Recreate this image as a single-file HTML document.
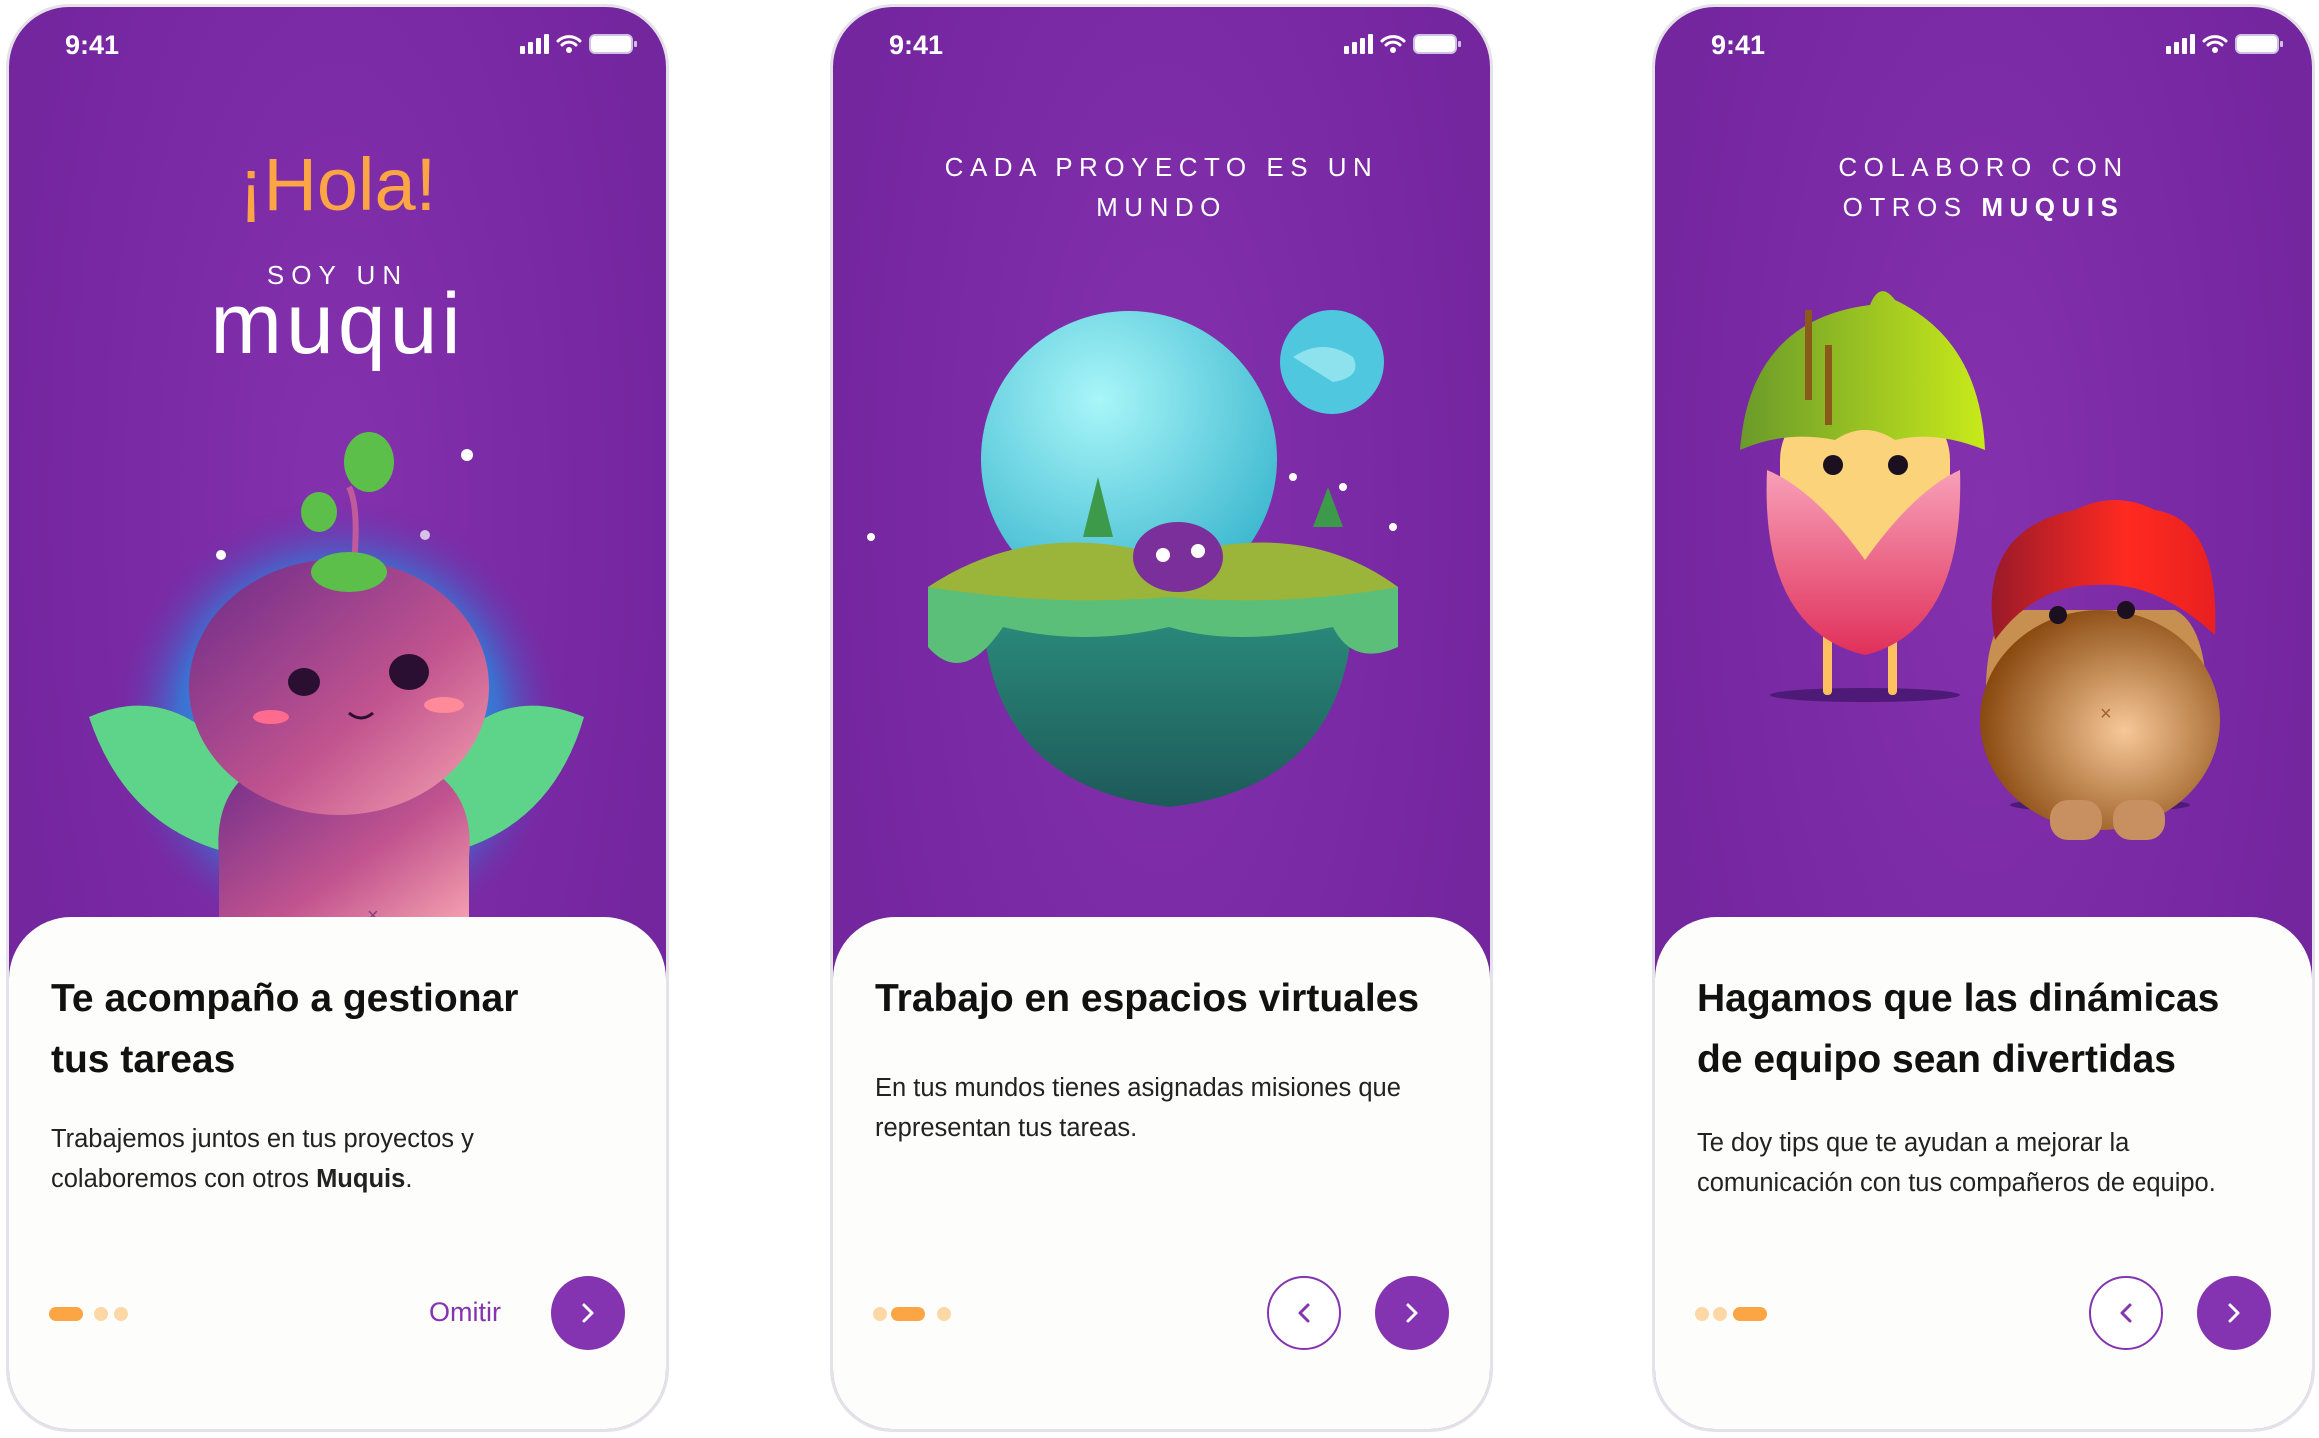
<!DOCTYPE html>
<html><head><meta charset="utf-8"><style>
*{margin:0;padding:0;box-sizing:border-box}
body{width:2319px;height:1438px;background:#fff;position:relative;overflow:hidden;font-family:"Liberation Sans",sans-serif}
.ph{position:absolute;top:7px;width:657px;height:1422px;border-radius:60px;overflow:hidden;background:radial-gradient(ellipse at 50% 35%,#8431ad 0%,#7627a1 60%,#6f249a 100%);box-shadow:0 0 0 3px #e4e2e8}
.st{position:absolute;left:56px;top:23px;color:#fff;font-size:27px;font-weight:bold}
.ic{position:absolute;right:28px;top:26px}
.card{position:absolute;left:0;top:910px;width:100%;height:520px;background:#fdfdfc;border-radius:62px 62px 0 0}
.t{position:absolute;left:42px;font-size:39px;font-weight:bold;color:#111;line-height:61px}
.b{position:absolute;left:42px;font-size:25.5px;color:#222;line-height:40px}
.dots{position:absolute;top:1300px;left:40px;height:14px}
.d{position:absolute;top:0;width:14px;height:14px;border-radius:7px;background:#fdd7a6}
.d.on{background:#fba544;width:34px}
.btn{position:absolute;top:1269px;width:74px;height:74px;border-radius:50%;background:#8434b0}
.btn.o{background:#fff;border:2px solid #8434b0}
.btn svg{position:absolute;left:23px;top:23px}
.hd{position:absolute;left:0;width:100%;text-align:center;color:#fff;font-size:26px;letter-spacing:6.5px;line-height:40px}
</style></head><body>

<div class="ph" style="left:9px">
 <div class="st">9:41</div>
 <svg class="ic" width="118" height="22" viewBox="0 0 118 22"><rect x="0" y="13" width="5" height="8" rx="1" fill="#fff"/><rect x="8" y="9" width="5" height="12" rx="1" fill="#fff"/><rect x="16" y="5" width="5" height="16" rx="1" fill="#fff"/><rect x="24" y="1" width="5" height="20" rx="1" fill="#fff"/><path d="M38 8a16 16 0 0 1 22 0M42 12a10 10 0 0 1 14 0" stroke="#fff" stroke-width="3" fill="none" stroke-linecap="round"/><circle cx="49" cy="17" r="3" fill="#fff"/><rect x="70" y="2" width="42" height="18" rx="5" fill="#fff" stroke="#cfc2e0" stroke-width="2"/><rect x="114" y="8" width="3" height="6" rx="1" fill="#cfc2e0"/></svg>
 <div style="position:absolute;top:135px;width:100%;text-align:center;color:#fba544;font-size:74px">¡Hola!</div>
 <div class="hd" style="top:248px;letter-spacing:7px">SOY UN</div>
 <div style="position:absolute;top:268px;width:100%;text-align:center;color:#fff;font-size:86px;letter-spacing:4px">muqui</div>
 <svg style="position:absolute;left:0;top:380px" width="657" height="540">
  <defs><radialGradient id="g1" cx=".5" cy=".5" r=".5"><stop offset="0" stop-color="#16e0f5"/><stop offset=".7" stop-color="#3d6fd0"/><stop offset="1" stop-color="#7627a1" stop-opacity="0"/></radialGradient>
  <linearGradient id="h1" x1="0" y1="0" x2="1" y2="1"><stop offset="0" stop-color="#6a2a8a"/><stop offset=".6" stop-color="#c2548f"/><stop offset="1" stop-color="#f7a4b0"/></linearGradient></defs>
  <ellipse cx="330" cy="340" rx="230" ry="230" fill="url(#g1)"/>
  <path d="M80 330 Q170 290 240 390 L240 470 Q120 450 80 330Z" fill="#5ed48a"/>
  <path d="M575 330 Q480 290 420 390 L420 470 Q540 450 575 330Z" fill="#5ed48a"/>
  <path d="M210 470 Q200 360 340 360 Q470 370 460 470 L460 540 L210 540Z" fill="url(#h1)"/>
  <ellipse cx="330" cy="300" rx="150" ry="128" fill="url(#h1)"/>
  <ellipse cx="295" cy="295" rx="16" ry="14" fill="#2a0f33"/><ellipse cx="400" cy="285" rx="20" ry="18" fill="#2a0f33"/>
  <ellipse cx="262" cy="330" rx="18" ry="7" fill="#ff6b8f"/><ellipse cx="435" cy="318" rx="20" ry="8" fill="#ff8a9a"/>
  <path d="M340 326 q12 10 24 0" stroke="#2a0f33" stroke-width="3" fill="none"/>
  <path d="M345 175 Q350 120 340 100" stroke="#c05a9a" stroke-width="6" fill="none"/>
  <ellipse cx="360" cy="75" rx="25" ry="30" fill="#5cbf4a"/><ellipse cx="310" cy="125" rx="18" ry="20" fill="#5cbf4a"/>
  <ellipse cx="340" cy="185" rx="38" ry="20" fill="#5cbf4a"/>
  <circle cx="458" cy="68" r="6" fill="#fff"/><circle cx="212" cy="168" r="5" fill="#fff"/><circle cx="416" cy="148" r="5" fill="#fff" opacity=".7"/>
  <text x="358" y="535" fill="#8a3c84" font-size="20">×</text>
 </svg>
 <div class="card">
  <div class="t" style="top:51px">Te acompaño a gestionar<br>tus tareas</div>
  <div class="b" style="top:202px">Trabajemos juntos en tus proyectos y<br>colaboremos con otros <b>Muquis</b>.</div>
 </div>
 <div class="dots"><div class="d on" style="left:0"></div><div class="d" style="left:45px"></div><div class="d" style="left:65px"></div></div>
 <div style="position:absolute;left:420px;top:1290px;color:#8434b0;font-size:27px">Omitir</div>
 <div class="btn" style="left:542px"><svg width="28" height="28"><path d="M10 6l8 8-8 8" stroke="#fff" stroke-width="3" fill="none" stroke-linecap="round" stroke-linejoin="round"/></svg></div>
</div>

<div class="ph" style="left:833px">
 <div class="st">9:41</div>
 <svg class="ic" width="118" height="22" viewBox="0 0 118 22"><rect x="0" y="13" width="5" height="8" rx="1" fill="#fff"/><rect x="8" y="9" width="5" height="12" rx="1" fill="#fff"/><rect x="16" y="5" width="5" height="16" rx="1" fill="#fff"/><rect x="24" y="1" width="5" height="20" rx="1" fill="#fff"/><path d="M38 8a16 16 0 0 1 22 0M42 12a10 10 0 0 1 14 0" stroke="#fff" stroke-width="3" fill="none" stroke-linecap="round"/><circle cx="49" cy="17" r="3" fill="#fff"/><rect x="70" y="2" width="42" height="18" rx="5" fill="#fff" stroke="#cfc2e0" stroke-width="2"/><rect x="114" y="8" width="3" height="6" rx="1" fill="#cfc2e0"/></svg>
 <div class="hd" style="top:140px">CADA PROYECTO ES UN<br>MUNDO</div>
 <svg style="position:absolute;left:0;top:280px" width="657" height="560">
  <defs><radialGradient id="b2" cx=".4" cy=".3" r=".7"><stop offset="0" stop-color="#a8f6f8"/><stop offset="1" stop-color="#3fb9d0"/></radialGradient>
  <linearGradient id="e2" x1="0" y1="0" x2="0" y2="1"><stop offset="0" stop-color="#2a8a7a"/><stop offset="1" stop-color="#1d5a5a"/></linearGradient></defs>
  <circle cx="296" cy="172" r="148" fill="url(#b2)"/>
  <circle cx="499" cy="75" r="52" fill="#4fc7de"/><path d="M460 70 q30-20 60 0 q10 20-20 25" fill="#a8eef5" opacity=".7"/>
  <path d="M150 330 Q160 500 336 520 Q510 500 520 330Z" fill="url(#e2)"/>
  <path d="M95 300 Q200 240 336 290 Q470 240 565 300 L565 360 Q520 380 500 340 Q400 360 336 340 Q250 360 170 340 Q130 400 95 360Z" fill="#5bbf7a"/>
  <path d="M95 300 Q200 230 336 270 Q470 230 565 300 Q450 320 336 310 Q220 320 95 300Z" fill="#9ab53a"/>
  <ellipse cx="345" cy="270" rx="45" ry="35" fill="#7a2f9a"/>
  <circle cx="330" cy="268" r="7" fill="#fff"/><circle cx="365" cy="264" r="7" fill="#fff"/>
  <path d="M250 250 l15-60 15 60z M480 240 l15-40 15 40z" fill="#3c9a4a"/>
  <circle cx="38" cy="250" r="4" fill="#fff"/><circle cx="460" cy="190" r="4" fill="#fff"/><circle cx="510" cy="200" r="4" fill="#fff"/><circle cx="560" cy="240" r="4" fill="#fff"/>
 </svg>
 <div class="card">
  <div class="t" style="top:51px">Trabajo en espacios virtuales</div>
  <div class="b" style="top:151px">En tus mundos tienes asignadas misiones que<br>representan tus tareas.</div>
 </div>
 <div class="dots"><div class="d" style="left:0"></div><div class="d on" style="left:18px"></div><div class="d" style="left:64px"></div></div>
 <div class="btn o" style="left:434px"><svg width="28" height="28" style="left:21px;top:21px"><path d="M18 6l-8 8 8 8" stroke="#8434b0" stroke-width="3" fill="none" stroke-linecap="round" stroke-linejoin="round"/></svg></div>
 <div class="btn" style="left:542px"><svg width="28" height="28"><path d="M10 6l8 8-8 8" stroke="#fff" stroke-width="3" fill="none" stroke-linecap="round" stroke-linejoin="round"/></svg></div>
</div>

<div class="ph" style="left:1655px">
 <div class="st">9:41</div>
 <svg class="ic" width="118" height="22" viewBox="0 0 118 22"><rect x="0" y="13" width="5" height="8" rx="1" fill="#fff"/><rect x="8" y="9" width="5" height="12" rx="1" fill="#fff"/><rect x="16" y="5" width="5" height="16" rx="1" fill="#fff"/><rect x="24" y="1" width="5" height="20" rx="1" fill="#fff"/><path d="M38 8a16 16 0 0 1 22 0M42 12a10 10 0 0 1 14 0" stroke="#fff" stroke-width="3" fill="none" stroke-linecap="round"/><circle cx="49" cy="17" r="3" fill="#fff"/><rect x="70" y="2" width="42" height="18" rx="5" fill="#fff" stroke="#cfc2e0" stroke-width="2"/><rect x="114" y="8" width="3" height="6" rx="1" fill="#cfc2e0"/></svg>
 <div class="hd" style="top:140px">COLABORO CON<br>OTROS <b>MUQUIS</b></div>
 <svg style="position:absolute;left:0;top:243px" width="657" height="620">
  <defs><linearGradient id="l3" x1="0" y1="0" x2="1" y2="0"><stop offset="0" stop-color="#6a9a2a"/><stop offset="1" stop-color="#c8ea1a"/></linearGradient>
  <linearGradient id="p3" x1="0" y1="0" x2="0" y2="1"><stop offset="0" stop-color="#f7a0b8"/><stop offset="1" stop-color="#e0305a"/></linearGradient>
  <radialGradient id="c3" cx=".6" cy=".55" r=".6"><stop offset="0" stop-color="#f7c898"/><stop offset="1" stop-color="#8a4a10"/></radialGradient>
  <linearGradient id="r3" x1="0" y1="0" x2="1" y2="0"><stop offset="0" stop-color="#9a1a2a"/><stop offset=".6" stop-color="#ff2a20"/><stop offset="1" stop-color="#e82020"/></linearGradient></defs>
  <ellipse cx="210" cy="445" rx="95" ry="7" fill="#4e1a78"/>
  <rect x="168" y="370" width="9" height="75" rx="4" fill="#ffc060"/><rect x="233" y="370" width="9" height="75" rx="4" fill="#ffc060"/>
  <rect x="125" y="150" width="170" height="170" rx="60" fill="#fbd37a"/>
  <path d="M112 220 Q105 380 210 405 Q310 380 305 220 Q260 240 210 310 Q160 240 112 220Z" fill="url(#p3)"/>
  <path d="M85 200 Q95 70 215 55 Q225 30 240 50 Q325 90 330 200 Q280 180 240 190 Q210 170 180 190 Q130 180 85 200Z" fill="url(#l3)"/>
  <rect x="150" y="60" width="7" height="90" fill="#8a5a1a"/><rect x="170" y="95" width="7" height="80" fill="#8a5a1a"/>
  <circle cx="178" cy="215" r="10" fill="#1a1020"/><circle cx="243" cy="215" r="10" fill="#1a1020"/>
  <ellipse cx="445" cy="555" rx="90" ry="7" fill="#4e1a78"/>
  <path d="M335 500 Q320 380 360 360 L520 360 Q560 380 550 500 Q535 530 520 490Z" fill="#c89050"/>
  <ellipse cx="445" cy="470" rx="120" ry="110" fill="url(#c3)"/>
  <rect x="395" y="550" width="52" height="40" rx="18" fill="#c89060"/><rect x="458" y="550" width="52" height="40" rx="18" fill="#c89060"/>
  <path d="M340 390 Q320 280 420 260 Q460 240 500 260 Q565 270 560 385 Q500 330 440 335 Q380 335 340 390Z" fill="url(#r3)"/>
  <circle cx="403" cy="365" r="9" fill="#1a1020"/><circle cx="471" cy="360" r="9" fill="#1a1020"/>
  <text x="445" y="470" fill="#a06030" font-size="20">×</text>
 </svg>
 <div class="card">
  <div class="t" style="top:51px">Hagamos que las dinámicas<br>de equipo sean divertidas</div>
  <div class="b" style="top:206px">Te doy tips que te ayudan a mejorar la<br>comunicación con tus compañeros de equipo.</div>
 </div>
 <div class="dots"><div class="d" style="left:0"></div><div class="d" style="left:18px"></div><div class="d on" style="left:38px"></div></div>
 <div class="btn o" style="left:434px"><svg width="28" height="28" style="left:21px;top:21px"><path d="M18 6l-8 8 8 8" stroke="#8434b0" stroke-width="3" fill="none" stroke-linecap="round" stroke-linejoin="round"/></svg></div>
 <div class="btn" style="left:542px"><svg width="28" height="28"><path d="M10 6l8 8-8 8" stroke="#fff" stroke-width="3" fill="none" stroke-linecap="round" stroke-linejoin="round"/></svg></div>
</div>
</body></html>
